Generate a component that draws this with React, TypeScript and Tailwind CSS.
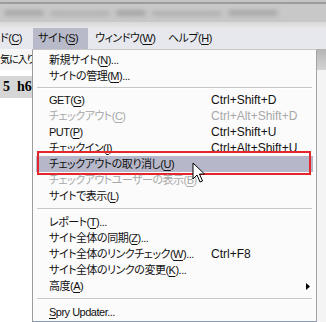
import React from "react"

type Item =
  | { sep: number }
  | {
      label: string
      k: string
      pre?: string
      tail?: string
      shortcut?: string
      disabled?: boolean
      active?: boolean
      sub?: boolean
    }

const items: Item[] = [
  { label: "新規サイト", k: "N", tail: "..." },
  { label: "サイトの管理", k: "M", tail: "..." },
  { sep: 8 },
  { label: "GET", k: "G", shortcut: "Ctrl+Shift+D" },
  { label: "チェックアウト", k: "C", shortcut: "Ctrl+Alt+Shift+D", disabled: true },
  { label: "PUT", k: "P", shortcut: "Ctrl+Shift+U" },
  { label: "チェックイン", k: "I", shortcut: "Ctrl+Alt+Shift+U" },
  { label: "チェックアウトの取り消し", k: "U", active: true },
  { label: "チェックアウトユーザーの表示", k: "B", disabled: true },
  { label: "サイトで表示", k: "L" },
  { sep: 10 },
  { label: "レポート", k: "T", tail: "..." },
  { label: "サイト全体の同期", k: "Z", tail: "..." },
  { label: "サイト全体のリンクチェック", k: "W", tail: "...", shortcut: "Ctrl+F8" },
  { label: "サイト全体のリンクの変更", k: "K", tail: "..." },
  { label: "高度", k: "A", sub: true },
  { sep: 10 },
  { label: "", pre: "S", k: "", tail: "pry Updater..." },
]

function Key({ k }: { k: string }) {
  return <span className="underline underline-offset-[2px] decoration-1">{k}</span>
}

function MenuRow({ item }: { item: Exclude<Item, { sep: number }> }) {
  return (
    <div
      className={`relative flex h-[16px] items-center ${item.active ? "bg-[#b6b7c8]" : ""} ${
        item.disabled ? "text-[#a8a8a8]" : "text-[#111]"
      }`}
    >
      <div className="w-[175px] shrink-0 pl-[13px] whitespace-nowrap tracking-[-0.5px]">
        {item.pre ? (
          <>
            <Key k={item.pre} />
            {item.tail}
          </>
        ) : (
          <>
            {item.label}(<Key k={item.k} />){item.tail}
          </>
        )}
      </div>
      {item.shortcut && <div className="text-[12px] whitespace-nowrap">{item.shortcut}</div>}
      {item.sub && (
        <svg className="absolute right-[3px] top-[5px]" width="4" height="7" viewBox="0 0 4 7">
          <path d="M0 0 L4 3.5 L0 7 Z" fill="#000" />
        </svg>
      )}
      {item.active && (
        <div className="absolute -top-[5px] -bottom-[3px] left-[1px] right-[2px] border-2 border-[#e3262c]" />
      )}
    </div>
  )
}

export default function App() {
  return (
    <div className="relative w-[326px] h-[322px] overflow-hidden bg-white font-['Liberation_Sans','Noto_Sans_CJK_JP',sans-serif] text-[11px] [font-feature-settings:'palt'] leading-none">
      {/* blurred toolbar strip */}
      <div className="h-[28px] flex flex-col">
        <div className="h-[2px] bg-[#c4c4c4]" />
        <div className="h-[2px] bg-[#9c9c9c]" />
        <div className="h-[18px] bg-[#c8c8c8] flex items-center gap-[6px] px-[4px] overflow-hidden">
          <div className="h-[6px] w-[40px] rounded bg-[#a9a9a9] blur-[2px]" />
          <div className="h-[5px] w-[60px] rounded bg-[#b2b2b2] blur-[2px]" />
          <div className="h-[6px] w-[30px] rounded bg-[#a6a6a6] blur-[2px]" />
          <div className="h-[5px] w-[70px] rounded bg-[#b0b0b0] blur-[2px]" />
          <div className="h-[6px] w-[50px] rounded bg-[#aaaaaa] blur-[2px]" />
        </div>
        <div className="h-[6px] bg-gradient-to-b from-[#d8d8d8] to-[#e6e6e6]" />
      </div>

      {/* menu bar */}
      <div className="h-[21px] flex items-stretch bg-[#e7e8ee] text-[#111] tracking-[-0.5px]">
        <div className="w-[33px] flex items-center whitespace-nowrap">
          ド(<Key k="C" />)
        </div>
        <div className="w-[55px] flex items-center pl-[5px] bg-[#b8bac9] whitespace-nowrap">
          サイト(<Key k="S" />)
        </div>
        <div className="w-[80px] flex items-center pl-[7px] whitespace-nowrap">
          ウィンドウ(<Key k="W" />)
        </div>
        <div className="flex items-center whitespace-nowrap">
          ヘルプ(<Key k="H" />)
        </div>
      </div>

      {/* page area with open menu */}
      <div className="h-[273px] flex">
        <div className="w-[32px] shrink-0 overflow-hidden flex flex-col">
          <div className="h-[21px] flex items-center bg-[#f6f6f6] whitespace-nowrap text-[10px] tracking-[-1px]">気に入り</div>
          <div className="h-[6px]" />
          <div className="h-[22px] flex items-center bg-[#d6d6d6] pl-[3px] font-['Liberation_Serif',serif] font-bold text-[14px] whitespace-nowrap">
            5&nbsp;&nbsp;h6
          </div>
        </div>

        <div className="w-[285px] shrink-0 bg-[#fbfbfb] border-l border-r border-b border-t border-l-[#9c9c9c] border-r-[#a4a4a4] border-t-[#c8c8c8] border-b-[#8d9bb0] pt-[2px] px-[3px]">
          {items.map((item, i) =>
            "sep" in item ? (
              <div key={i} className="flex flex-col justify-center px-[1px]" style={{ height: item.sep }}>
                <div className="h-px bg-[#c6c6c6]" />
                <div className="h-px bg-white" />
              </div>
            ) : (
              <MenuRow key={i} item={item} />
            )
          )}
        </div>

        <div className="flex-1 flex flex-col">
          <div className="h-[21px] bg-gradient-to-b from-[#b4b4b4] to-[#d4d4d4]" />
          <div className="flex-1 bg-[#f4f4f4]" />
        </div>
      </div>

      {/* mouse pointer */}
      <svg className="absolute left-[192px] top-[162px]" width="14" height="22" viewBox="0 0 14 22">
        <path
          d="M1 1 L1 17 L5 13 L8 20 L10.5 19 L7.5 12 L12.5 12 Z"
          fill="#fff"
          stroke="#000"
          strokeWidth="1"
          strokeLinejoin="miter"
        />
      </svg>
    </div>
  )
}
